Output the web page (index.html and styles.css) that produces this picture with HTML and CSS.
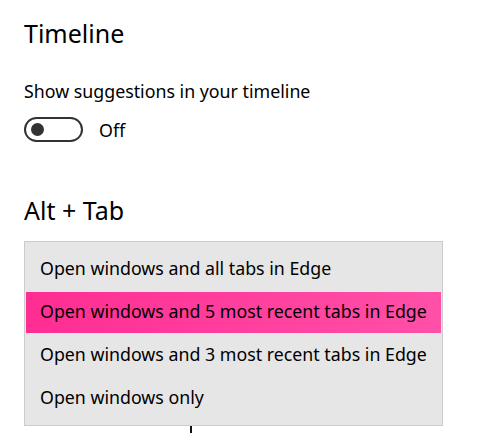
FILE: index.html
```html
<!DOCTYPE html>
<html lang="en">
<head>
<meta charset="utf-8">
<title>Timeline settings</title>
<link rel="stylesheet" href="styles.css">
</head>
<body>
<main class="page">
  <h1 class="title">Timeline</h1>
  <p class="label">Show suggestions in your timeline</p>
  <div class="toggle-row">
    <span class="toggle"><span class="knob"></span></span>
    <span class="toggle-text">Off</span>
  </div>
  <h2 class="title section">Alt + Tab</h2>
  <ul class="dropdown">
    <li class="item">Open windows and all tabs in Edge</li>
    <li class="item selected">Open windows and 5 most recent tabs in Edge</li>
    <li class="item">Open windows and 3 most recent tabs in Edge</li>
    <li class="item">Open windows only</li>
  </ul>
  <div class="fragment"></div>
</main>
</body>
</html>
```
FILE: styles.css
```css
html, body {
  margin: 0;
  background: #ffffff;
}
body {
  font-family: "Noto Sans", "Open Sans", sans-serif;
  color: #000000;
}
.page {
  padding: 17px 24px 0;
}
.title {
  margin: 0;
  font-size: 25px;
  line-height: 32px;
  font-weight: 400;
}
.label {
  margin: 30px 0 0;
  font-size: 17.8px;
  line-height: 24px;
}
.toggle-row {
  margin-top: 14px;
  height: 25px;
  display: flex;
  align-items: center;
  gap: 16px;
}
.toggle {
  box-sizing: border-box;
  width: 59px;
  height: 25px;
  border: 2px solid #333333;
  border-radius: 13px;
  display: flex;
  align-items: center;
  padding-left: 5px;
}
.knob {
  width: 13px;
  height: 13px;
  border-radius: 50%;
  background: #333333;
}
.toggle-text {
  font-size: 17.8px;
  line-height: 24px;
}
.section {
  margin-top: 52px;
}
.dropdown {
  list-style: none;
  margin: 15px 0 0;
  box-sizing: border-box;
  width: 419px;
  padding: 7px 1px 6px;
  border: 1px solid #cccccc;
  background: #e6e6e6;
  display: flex;
  flex-direction: column;
  gap: 2px;
}
.item {
  box-sizing: border-box;
  height: 41px;
  padding: 0 0 4px 14px;
  display: flex;
  align-items: center;
  font-size: 17.8px;
  line-height: 24px;
  white-space: nowrap;
}
.item.selected {
  background: linear-gradient(to right, #ff2d92, #ff50a8);
}
.fragment {
  margin-left: 166px;
  width: 2px;
  height: 7px;
  background: #111111;
}
```
